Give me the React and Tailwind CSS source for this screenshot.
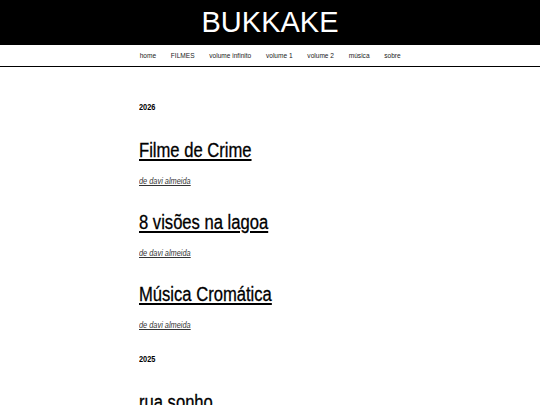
import React from 'react';

const NAV = ['home', 'FILMES', 'volume infinito', 'volume 1', 'volume 2', 'música', 'sobre'];

const YEARS = [
  {
    year: '2026',
    films: ['Filme de Crime', '8 visões na lagoa', 'Música Cromática'],
  },
  {
    year: '2025',
    films: ['rua sonho'],
  },
];

// the site uses a narrow Arial; we squeeze Liberation Sans horizontally to get the same widths
export default function App() {
  return (
    <div className="min-h-screen bg-white text-black font-['Liberation_Sans',Arial,sans-serif]">
      {/* Header */}
      <header className="h-[45px] bg-black flex items-center justify-center">
        <h1 className="text-white text-[29px] leading-none">BUKKAKE</h1>
      </header>

      {/* Nav */}
      <nav className="h-[22px] border-b border-black flex items-center justify-center">
        <div className="flex items-center gap-[18px] text-[8px] text-[#222] scale-x-[0.82]">
          {NAV.map((item) => (
            <a key={item} href="#" className="leading-none whitespace-nowrap">
              {item}
            </a>
          ))}
        </div>
      </nav>

      {/* Main */}
      <main className="w-[262px] mx-auto pt-[34px]">
        {YEARS.map((group, gi) => (
          <section key={group.year} className={gi > 0 ? 'mt-[23px]' : ''}>
            <p className="text-[9px] leading-[12px] font-bold origin-left scale-x-[0.82]">{group.year}</p>
            {group.films.map((film, fi) => (
              <article key={film} className={fi === 0 ? 'mt-[25px]' : 'mt-[24px]'}>
                <h2 className="text-[20px] leading-[24px] origin-left scale-x-[0.83] whitespace-nowrap [-webkit-text-stroke:0.3px_black]">
                  <a href="#" className="underline underline-offset-2 decoration-[1.5px]">
                    {film}
                  </a>
                </h2>
                {group.year === '2026' && (
                  <p className="mt-[14px] text-[9px] leading-[10px] origin-left scale-x-[0.82]">
                    <a href="#" className="italic underline text-[#333]">
                      de davi almeida
                    </a>
                  </p>
                )}
              </article>
            ))}
          </section>
        ))}
      </main>
    </div>
  );
}
